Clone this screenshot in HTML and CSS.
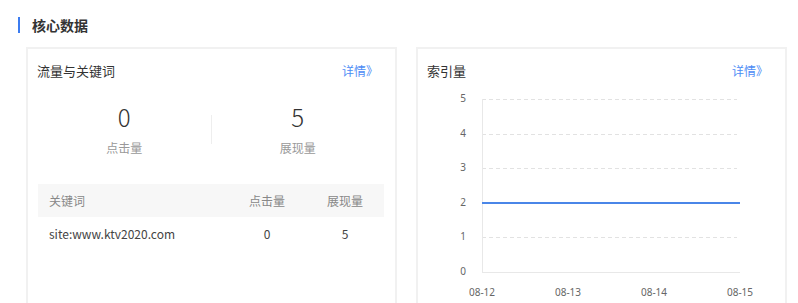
FILE: index.html
```html
<!DOCTYPE html>
<html lang="zh-CN">
<head>
    <meta charset="UTF-8">
    <title>核心数据</title>
    <link rel="stylesheet" href="styles.css">
</head>
<body>
    <div class="section">
        <h2 class="section-title">核心数据</h2>
        <div class="cards">
            <div class="card">
                <div class="card-head">
                    <span class="card-title">流量与关键词</span>
                    <a class="more" href="#">详情》</a>
                </div>
                <div class="stats">
                    <div class="stat">
                        <div class="stat-num">0</div>
                        <div class="stat-label">点击量</div>
                    </div>
                    <div class="stat-divider"></div>
                    <div class="stat">
                        <div class="stat-num">5</div>
                        <div class="stat-label">展现量</div>
                    </div>
                </div>
                <table class="kw-table">
                    <thead>
                        <tr>
                            <th class="col-kw">关键词</th>
                            <th class="col-num">点击量</th>
                            <th class="col-num">展现量</th>
                        </tr>
                    </thead>
                    <tbody>
                        <tr>
                            <td class="col-kw">site:www.ktv2020.com</td>
                            <td class="col-num">0</td>
                            <td class="col-num">5</td>
                        </tr>
                    </tbody>
                </table>
            </div>
            <div class="card">
                <div class="card-head">
                    <span class="card-title">索引量</span>
                    <a class="more" href="#">详情》</a>
                </div>
                <svg class="chart" width="367" height="230" viewBox="0 0 367 230">
                    <g class="grid">
                        <line x1="64" y1="19.5" x2="319" y2="19.5"/>
                        <line x1="64" y1="54.5" x2="319" y2="54.5"/>
                        <line x1="64" y1="88.5" x2="319" y2="88.5"/>
                        <line x1="64" y1="157.5" x2="319" y2="157.5"/>
                    </g>
                    <line class="axis" x1="64.5" y1="19" x2="64.5" y2="192"/>
                    <line class="axis" x1="64" y1="192.5" x2="322" y2="192.5"/>
                    <line class="series" x1="64" y1="123" x2="322" y2="123"/>
                    <g class="ylabels">
                        <text x="45" y="22">5</text>
                        <text x="45" y="57">4</text>
                        <text x="45" y="91">3</text>
                        <text x="45" y="126">2</text>
                        <text x="45" y="160">1</text>
                        <text x="45" y="195">0</text>
                    </g>
                    <g class="xlabels">
                        <text x="64" y="216">08-12</text>
                        <text x="150" y="216">08-13</text>
                        <text x="236" y="216">08-14</text>
                        <text x="322" y="216">08-15</text>
                    </g>
                </svg>
            </div>
        </div>
    </div>
</body>
</html>
```

FILE: styles.css
```css
body {
    margin: 0;
    background: #fff;
    color: #333;
    font-family: "Noto Sans CJK SC", "Noto Sans", sans-serif;
}
.section { padding: 17px 0 0 18px; }
.section-title {
    margin: 0;
    padding-left: 12px;
    border-left: 2px solid #3c7cf0;
    font-size: 14px;
    font-weight: bold;
    line-height: 16px;
    color: #333;
}
.cards { display: flex; gap: 19px; margin-top: 14px; padding-left: 8px; }
.card {
    width: 371px;
    height: 280px;
    box-sizing: border-box;
    border: 2px solid #f1f1f1;
    border-bottom: none;
    overflow: hidden;
}
.card-head {
    display: flex;
    justify-content: space-between;
    align-items: center;
    padding: 11px 17px 0 9px;
    height: 20px;
}
.card-title { font-size: 13px; color: #333; }
.more { font-size: 12px; color: #4d8cf5; text-decoration: none; }

.stats { display: flex; align-items: center; margin: 23px 11px 0 10px; }
.stat { flex: 1; text-align: center; }
.stat-divider { width: 1px; height: 29px; background: #eee; }
.stat-num { font-size: 24px; font-weight: 300; line-height: 28px; color: #333; }
.stat-label { font-size: 12px; color: #999; line-height: 16px; margin-top: 9px; }

.kw-table {
    width: 346px;
    margin: 28px 0 0 10px;
    border-collapse: collapse;
    font-size: 12px;
}
.kw-table th, .kw-table td { padding: 0; line-height: 16px; }
.kw-table th { background: #f7f7f7; color: #888; font-weight: normal; height: 33px; }
.kw-table td { color: #444; height: 34px; }
.kw-table .col-kw { text-align: left; padding-left: 11px; }
.kw-table .col-num { text-align: center; width: 78px; }

.chart { display: block; }
.grid line { stroke: #e2e2e2; stroke-width: 1; stroke-dasharray: 4 3; }
.axis { stroke: #e8e8e8; stroke-width: 1; }
.series { stroke: #4a86e8; stroke-width: 2; }
.chart text { font-family: "Noto Sans", sans-serif; font-size: 10px; fill: #666; text-anchor: middle; }
```
